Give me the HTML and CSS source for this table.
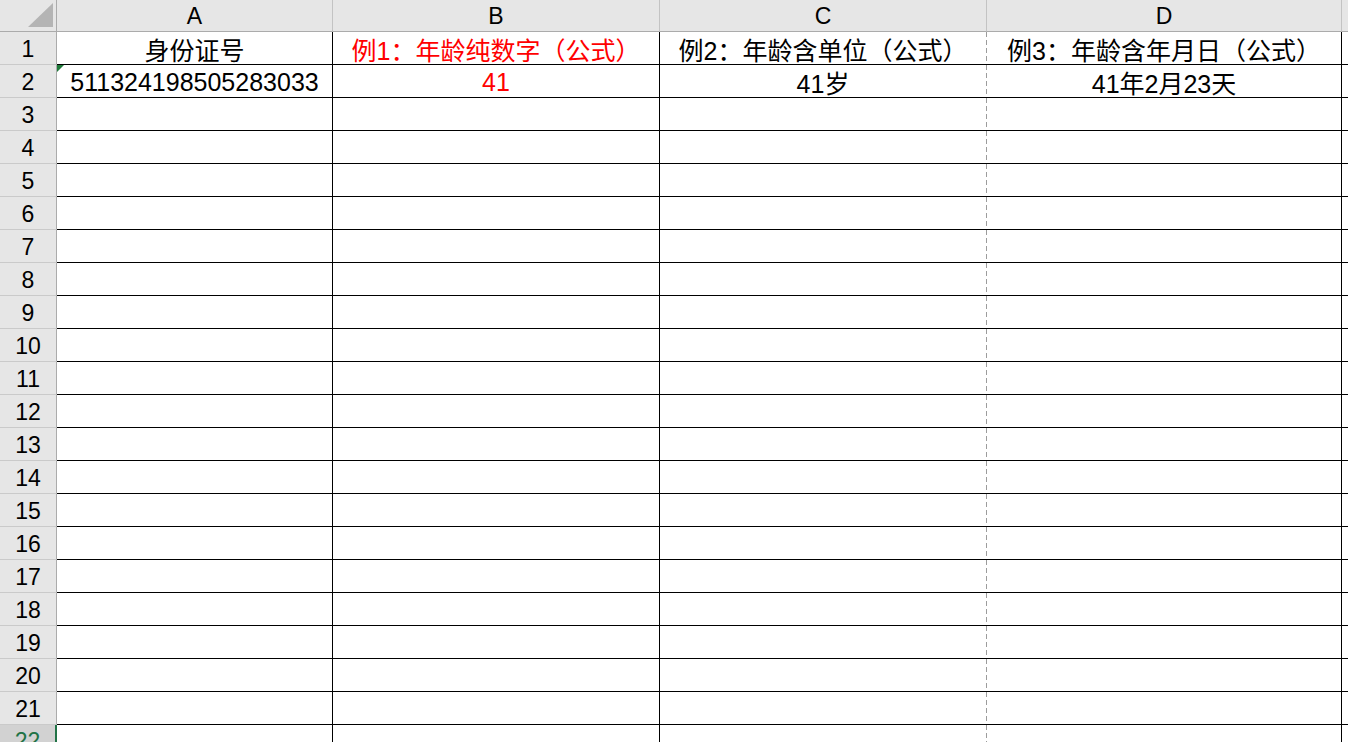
FILE: index.html
```html
<!DOCTYPE html>
<html lang="zh-CN">
<head>
<meta charset="utf-8">
<title>Sheet</title>
<link rel="stylesheet" href="styles.css">
</head>
<body>
<div class="sheet">
  <div class="corner"><span class="tri"></span></div>
  <div class="hd">A</div>
  <div class="hd">B</div>
  <div class="hd">C</div>
  <div class="hd">D</div>
  <div class="hd hd-e"></div>

  <div class="rh">1</div>
  <div class="c">身份证号</div>
  <div class="c red">例1：年龄纯数字（公式）</div>
  <div class="c cc">例2：年龄含单位（公式）</div>
  <div class="c">例3：年龄含年月日（公式）</div>
  <div class="ce"></div>

  <div class="rh">2</div>
  <div class="c txt">511324198505283033</div>
  <div class="c red">41</div>
  <div class="c cc">41岁</div>
  <div class="c">41年2月23天</div>
  <div class="ce"></div>

  <div class="rh">3</div><div class="c"></div><div class="c"></div><div class="c cc"></div><div class="c"></div><div class="ce"></div>
  <div class="rh">4</div><div class="c"></div><div class="c"></div><div class="c cc"></div><div class="c"></div><div class="ce"></div>
  <div class="rh">5</div><div class="c"></div><div class="c"></div><div class="c cc"></div><div class="c"></div><div class="ce"></div>
  <div class="rh">6</div><div class="c"></div><div class="c"></div><div class="c cc"></div><div class="c"></div><div class="ce"></div>
  <div class="rh">7</div><div class="c"></div><div class="c"></div><div class="c cc"></div><div class="c"></div><div class="ce"></div>
  <div class="rh">8</div><div class="c"></div><div class="c"></div><div class="c cc"></div><div class="c"></div><div class="ce"></div>
  <div class="rh">9</div><div class="c"></div><div class="c"></div><div class="c cc"></div><div class="c"></div><div class="ce"></div>
  <div class="rh">10</div><div class="c"></div><div class="c"></div><div class="c cc"></div><div class="c"></div><div class="ce"></div>
  <div class="rh">11</div><div class="c"></div><div class="c"></div><div class="c cc"></div><div class="c"></div><div class="ce"></div>
  <div class="rh">12</div><div class="c"></div><div class="c"></div><div class="c cc"></div><div class="c"></div><div class="ce"></div>
  <div class="rh">13</div><div class="c"></div><div class="c"></div><div class="c cc"></div><div class="c"></div><div class="ce"></div>
  <div class="rh">14</div><div class="c"></div><div class="c"></div><div class="c cc"></div><div class="c"></div><div class="ce"></div>
  <div class="rh">15</div><div class="c"></div><div class="c"></div><div class="c cc"></div><div class="c"></div><div class="ce"></div>
  <div class="rh">16</div><div class="c"></div><div class="c"></div><div class="c cc"></div><div class="c"></div><div class="ce"></div>
  <div class="rh">17</div><div class="c"></div><div class="c"></div><div class="c cc"></div><div class="c"></div><div class="ce"></div>
  <div class="rh">18</div><div class="c"></div><div class="c"></div><div class="c cc"></div><div class="c"></div><div class="ce"></div>
  <div class="rh">19</div><div class="c"></div><div class="c"></div><div class="c cc"></div><div class="c"></div><div class="ce"></div>
  <div class="rh">20</div><div class="c"></div><div class="c"></div><div class="c cc"></div><div class="c"></div><div class="ce"></div>
  <div class="rh">21</div><div class="c"></div><div class="c"></div><div class="c cc"></div><div class="c"></div><div class="ce"></div>
  <div class="rh rh-sel">22</div><div class="c"></div><div class="c"></div><div class="c cc"></div><div class="c"></div><div class="ce"></div>
</div>
</body>
</html>
```

FILE: styles.css
```css
html, body {
  margin: 0;
  padding: 0;
  background: #ffffff;
  overflow: hidden;
}

body {
  width: 1348px;
  height: 742px;
  font-family: "Liberation Sans", "Noto Sans CJK SC", sans-serif;
  color: #000;
}

.sheet {
  display: grid;
  grid-template-columns: 57px 276px 327px 327px 355px 1fr;
  grid-template-rows: 32px;
  grid-auto-rows: 33px;
  width: 1348px;
}

.sheet > div {
  box-sizing: border-box;
  display: flex;
  align-items: center;
  justify-content: center;
  white-space: nowrap;
  overflow: hidden;
}

.corner {
  position: relative;
  background: #e6e6e6;
  border-right: 1px solid #ababab;
  border-bottom: 1px solid #ababab;
}

.tri {
  position: absolute;
  left: 28px;
  top: 3px;
  width: 0;
  height: 0;
  border-left: 25px solid transparent;
  border-bottom: 24px solid #b4b4b4;
}

.hd {
  background: #e6e6e6;
  border-right: 1px solid #c3c3c3;
  border-bottom: 1px solid #ababab;
  font-size: 23px;
  padding-top: 2px;
}

.hd-e {
  border-right: none;
}

.rh {
  background: #e6e6e6;
  border-right: 1px solid #ababab;
  border-bottom: 1px solid #cacaca;
  font-size: 23px;
  padding-top: 3px;
}

.rh-sel {
  background: #d2d2d2;
  color: #217346;
  border-right: 2px solid #217346;
  align-items: flex-start !important;
}

.c {
  position: relative;
  border-right: 1px solid #000;
  border-bottom: 1px solid #000;
  font-size: 25px;
  padding-top: 2px;
}

.cc {
  border-right: none;
  padding-right: 1px;
  background-image: repeating-linear-gradient(to bottom, #9c9c9c 0, #9c9c9c 5px, transparent 5px, transparent 8px);
  background-size: 1px 100%;
  background-position: right top;
  background-repeat: no-repeat;
}

.ce {
  border-bottom: 1px solid #000;
}

.red {
  color: #ff0000;
}

.txt::before {
  content: "";
  position: absolute;
  left: 0;
  top: 0;
  width: 0;
  height: 0;
  border-top: 7px solid #1f7a3a;
  border-right: 7px solid transparent;
}
```
